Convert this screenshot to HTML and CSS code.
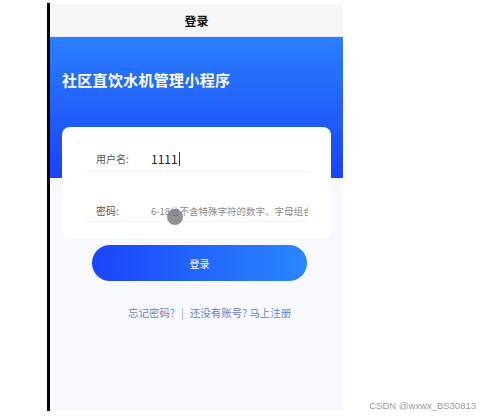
FILE: index.html
```html
<!DOCTYPE html>
<html lang="zh-CN">
<head>
    <meta charset="UTF-8">
    <meta name="viewport" content="width=device-width, initial-scale=1.0">
    <title>登录</title>
    <link rel="stylesheet" href="styles.css">
</head>
<body>
    <div class="phone">
        <div class="nav-bar">登录</div>
        <div class="page">
            <h1 class="app-title">社区直饮水机管理小程序</h1>
            <div class="login-card">
                <div class="field">
                    <span class="field-label">用户名:</span>
                    <span class="field-value">1111<span class="caret"></span></span>
                </div>
                <div class="field field-pwd">
                    <span class="field-label">密码:</span>
                    <span class="field-placeholder">6-18位不含特殊字符的数字、字母组合</span>
                    <span class="touch-dot"></span>
                </div>
            </div>
            <div class="login-btn">登录</div>
            <div class="links">
                <span class="link-muted">忘记密码?</span>
                <span class="link-sep">|</span>
                <span class="link-muted">还没有账号?</span>
                <span class="link-main">马上注册</span>
            </div>
        </div>
    </div>
    <div class="watermark">CSDN @wxwx_BS30813</div>
</body>
</html>
```

FILE: styles.css
```css
body {
    margin: 0;
    background-color: #ffffff;
    font-family: "Noto Sans CJK SC", "Noto Sans", sans-serif;
    height: 416px;
    overflow: hidden;
    position: relative;
}
.phone {
    margin: 3px 0 0 47px;
    width: 293px;
    height: 408px;
    border-left: 3px solid #000000;
    display: flex;
    flex-direction: column;
}
.nav-bar {
    height: 33px;
    margin-top: 1px;
    background-color: #f7f7f7;
    border-bottom: 1px solid #dfe8f5;
    box-sizing: border-box;
    display: flex;
    align-items: center;
    justify-content: center;
    font-size: 12px;
    font-weight: bold;
    color: #111111;
}
.page {
    flex: 1;
    background: linear-gradient(to bottom, #2a7ffc 0, #1a42fb 141px, #f7f9fe 141px);
    display: flex;
    flex-direction: column;
}
.app-title {
    margin: 32px 0 0 12px;
    font-size: 15px;
    line-height: 22px;
    font-weight: bold;
    letter-spacing: 0.3px;
    color: #ffffff;
}
.login-card {
    margin: 36px 12px 0;
    height: 111px;
    box-sizing: border-box;
    padding: 19px 23px 0;
    background-color: #ffffff;
    border-radius: 8px;
    display: flex;
    flex-direction: column;
    gap: 24px;
}
.field {
    position: relative;
    height: 26px;
    box-sizing: border-box;
    padding: 0 0 0 11px;
    border-bottom: 1px solid #f2f3f6;
    display: flex;
    align-items: center;
    white-space: nowrap;
}
.field-pwd {
    padding-top: 4px;
}
.field-label {
    width: 55px;
    flex-shrink: 0;
    font-size: 10px;
    color: #555555;
}
.field-value {
    font-size: 12px;
    color: #222222;
    display: flex;
    align-items: center;
}
.caret {
    width: 1px;
    height: 14px;
    margin-left: 1px;
    background-color: #333333;
}
.field-placeholder {
    flex: 1;
    min-width: 0;
    overflow: hidden;
    font-size: 9.5px;
    color: #8a8a8a;
}
.touch-dot {
    position: absolute;
    left: 82px;
    top: 13px;
    width: 16px;
    height: 16px;
    border-radius: 50%;
    background-color: rgba(110, 110, 110, 0.75);
}
.login-btn {
    margin: 7px 0 0 42px;
    width: 215px;
    height: 36px;
    border-radius: 18px;
    background: linear-gradient(to right, #1a44fb, #2a87fc);
    color: #ffffff;
    font-size: 10px;
    display: flex;
    align-items: center;
    justify-content: center;
}
.links {
    margin: 24px 0 0 78px;
    font-size: 10.5px;
    display: flex;
    align-items: center;
    gap: 5px;
}
.link-muted { color: #6c80c6; }
.link-sep { color: #8aa4dc; margin: 0 1px; }
.link-main { color: #4a8ee4; margin-left: -3px; }
.watermark {
    position: absolute;
    right: 4px;
    bottom: 5px;
    font-family: "Liberation Sans", Arial, sans-serif;
    font-size: 9.5px;
    color: #9a9a9a;
}
```
